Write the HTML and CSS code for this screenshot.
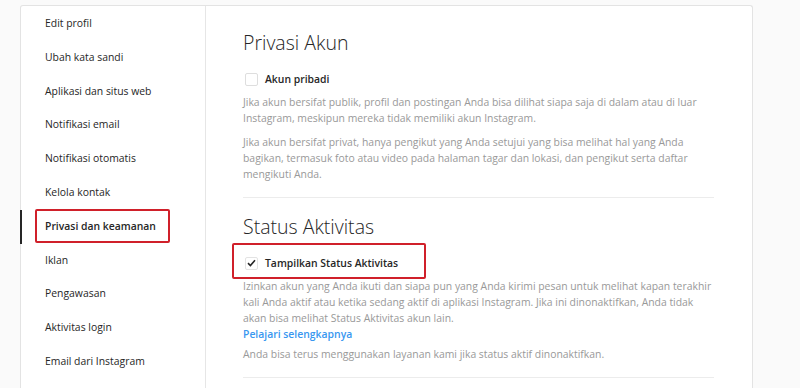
FILE: index.html
```html
<!DOCTYPE html>
<html lang="id">
<head>
  <meta charset="UTF-8" />
  <meta name="viewport" content="width=device-width, initial-scale=1.0" />
  <title>Privasi dan keamanan</title>
  <link rel="stylesheet" href="styles.css">
</head>
<body>
  <div class="page">
    <div class="card">
      <!-- Sidebar -->
      <ul class="nav">
        <li class="nav-item">Edit profil</li>
        <li class="nav-item">Ubah kata sandi</li>
        <li class="nav-item">Aplikasi dan situs web</li>
        <li class="nav-item">Notifikasi email</li>
        <li class="nav-item">Notifikasi otomatis</li>
        <li class="nav-item">Kelola kontak</li>
        <li class="nav-item active">Privasi dan keamanan<span class="mark mark-nav"></span></li>
        <li class="nav-item">Iklan</li>
        <li class="nav-item">Pengawasan</li>
        <li class="nav-item">Aktivitas login</li>
        <li class="nav-item">Email dari Instagram</li>
      </ul>
      <!-- Settings content -->
      <div class="content">
        <section class="section">
          <h2>Privasi Akun</h2>
          <label class="check-row">
            <span class="box"></span>
            <span class="check-label">Akun pribadi</span>
          </label>
          <p class="note">Jika akun bersifat publik, profil dan postingan Anda bisa dilihat siapa saja di dalam atau di luar Instagram, meskipun mereka tidak memiliki akun Instagram.</p>
          <p class="note">Jika akun bersifat privat, hanya pengikut yang Anda setujui yang bisa melihat hal yang Anda bagikan, termasuk foto atau video pada halaman tagar dan lokasi, dan pengikut serta daftar mengikuti Anda.</p>
        </section>
        <section class="section">
          <h2>Status Aktivitas</h2>
          <label class="check-row">
            <span class="box checked">
              <svg width="9" height="8" viewBox="0 0 9 8"><polyline points="1,4.2 3.4,6.5 8,1.2" fill="none" stroke="#262626" stroke-width="1.6"/></svg>
            </span>
            <span class="check-label">Tampilkan Status Aktivitas</span>
            <span class="mark mark-check"></span>
          </label>
          <p class="note">Izinkan akun yang Anda ikuti dan siapa pun yang Anda kirimi pesan untuk melihat kapan terakhir kali Anda aktif atau ketika sedang aktif di aplikasi Instagram. Jika ini dinonaktifkan, Anda tidak akan bisa melihat Status Aktivitas akun lain.<a class="more" href="#">Pelajari selengkapnya</a></p>
          <p class="note last">Anda bisa terus menggunakan layanan kami jika status aktif dinonaktifkan.</p>
        </section>
      </div>
    </div>
  </div>
</body>
</html>
```

FILE: styles.css
```css
/* Global */
body {
  margin: 0;
  font-family: "Open Sans", "Noto Sans", Arial, sans-serif;
  background-color: #fafafa;
  color: #262626;
  overflow: hidden;
}
.page {
  padding: 5px 0 0 20px;
}
.card {
  display: flex;
  width: 731px;
  height: 420px;
  background-color: #fff;
  border: 1px solid #e3e3e3;
  border-bottom: none;
  border-radius: 3px 3px 0 0;
}
/* Sidebar */
.nav {
  list-style: none;
  margin: 0;
  padding: 1px 0 0;
  width: 184px;
  flex-shrink: 0;
  border-right: 1px solid #e6e6e6;
}
.nav-item {
  position: relative;
  padding-left: 24px;
  line-height: 33.8px;
  font-size: 10.4px;
}
.nav-item.active {
  margin-left: -1px;
  padding-left: 23px;
  border-left: 2px solid #262626;
  font-weight: 600;
}
/* red annotation boxes */
.mark {
  position: absolute;
  border: 2px solid #d0202a;
  border-radius: 2px;
  box-sizing: border-box;
}
.mark-nav {
  left: 13px;
  top: -1px;
  width: 135px;
  height: 34px;
}
.mark-check {
  left: -11px;
  top: -11px;
  width: 194px;
  height: 36px;
}
/* Content */
.content {
  width: 471px;
  padding: 25px 0 0 37px;
}
.section {
  border-bottom: 1px solid #ececec;
  padding-bottom: 15px;
  margin-bottom: 17px;
}
.section h2 {
  margin: 0;
  font-size: 19.5px;
  font-weight: 300;
  line-height: 24px;
  color: #262626;
}
.check-row {
  position: relative;
  display: flex;
  align-items: center;
  margin-top: 15px;
  height: 18px;
}
.box {
  display: flex;
  align-items: center;
  justify-content: center;
  width: 13px;
  height: 13px;
  margin-left: 2px;
  box-sizing: border-box;
  border: 1px solid #dedede;
  border-radius: 2px;
}
.box.checked {
  border-color: #e3e3e3;
}
.check-label {
  margin-left: 7px;
  font-size: 10.4px;
  font-weight: 600;
}
.note {
  margin: 8px 0 0;
  font-size: 10.4px;
  line-height: 16px;
  color: #999;
}
.check-row + .note {
  margin-top: 6px;
}
.note.last {
  margin-top: 4px;
}
.more {
  display: block;
  color: #3897f0;
  font-weight: 600;
  text-decoration: none;
}
```
